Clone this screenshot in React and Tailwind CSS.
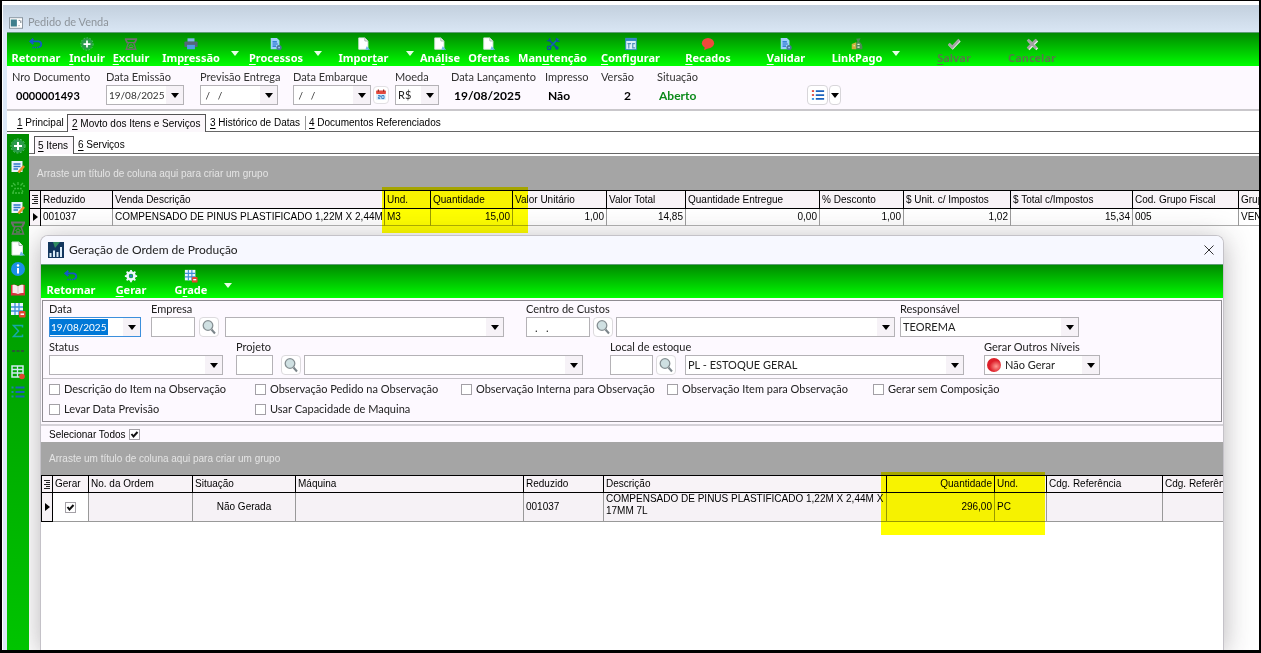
import React from 'react'
import { useState } from 'react'
import clsx from 'clsx'

const Svg = ({ children, className = 'h-4 w-4' }) => (
    <svg viewBox="0 0 16 16" className={clsx('block shrink-0', className)} fill="none" aria-hidden="true">{children}</svg>
)

const icons = {
    undo: (
        <>
            <path d="M5 2 L1.500 5 L5 8 M2 5 H11 Q14 5.500 14 8.500 Q14 11 11 11.500" stroke="#1458c8" strokeWidth="2" />
            <path d="M4 12 H11" stroke="#1458c8" strokeWidth="1.500" strokeDasharray="1.500 1" />
        </>
    ),
    plus: (
        <>
            <circle cx="8" cy="8" r="6.500" fill="#2c9a4c" />
            <circle cx="8" cy="8" r="7" stroke="#5fc47e" strokeDasharray="2 1.500" />
            <path d="M8 4 V12 M4 8 H12" stroke="#fff" strokeWidth="2" />
        </>
    ),
    trash: (
        <>
            <path d="M1 2.500 H15 M2 3 L4 7 M14 3 L12 7" stroke="#6d6f6c" strokeWidth="2" />
            <path d="M5 6.500 H11 L13.500 14 H2.500 Z" stroke="#6d6f6c" strokeWidth="1.500" />
            <path d="M5.500 11 L8 8.500 L10.500 11 M6 12 H10" stroke="#857a80" />
        </>
    ),
    printer: (
        <>
            <rect x="4" y="1.500" width="8" height="4" fill="#7db6ea" />
            <rect x="0.500" y="5" width="15" height="6.500" rx="1" fill="#54657a" />
            <rect x="3.500" y="9" width="9" height="5" fill="#4f9be6" />
        </>
    ),
    process: (
        <>
            <path d="M2 1 H9 L12 4 V14 H2 Z" fill="#9fd0fa" />
            <path d="M4 5.500 H9 M4 8 H10 M4 10.500 H8" stroke="#1869c9" strokeWidth="1.300" />
            <circle cx="11.500" cy="12" r="3" fill="#4a7599" />
            <circle cx="11.500" cy="12" r="1" fill="#9fd0fa" />
        </>
    ),
    page: (
        <>
            <path d="M2 1 H9 L12.500 4.500 V14 H2 Z" fill="#fff" stroke="#d8e6dc" />
            <path d="M9 1 V4.500 H12.500" stroke="#9ab0a4" />
            <path d="M11 10.500 L15 14.500 H9.500 Z" fill="#6fb7ee" />
        </>
    ),
    tools: (
        <>
            <path d="M3 3 L12 12" stroke="#0f4f9d" strokeWidth="2" />
            <path d="M14 2 L4 12" stroke="#1263b4" strokeWidth="2" />
            <path d="M1 4 Q4.500 5.500 4.500 1 M15.500 5 Q11 5.500 12 1" stroke="#0f4f9d" strokeWidth="1.500" />
            <circle cx="3.500" cy="12.500" r="2" stroke="#0f4f9d" strokeWidth="1.500" />
            <circle cx="12.500" cy="12.500" r="2" fill="#0f4f9d" />
        </>
    ),
    config: (
        <>
            <rect x="2" y="1.500" width="12" height="13" fill="#dbeefa" stroke="#2f86c4" />
            <rect x="2" y="1.500" width="12" height="3" fill="#2f86c4" />
            <path d="M4 7.500 H8 M5.500 7.500 V13 M12.500 7.500 H10 V12.500 H12.500" stroke="#4f93bd" strokeWidth="1.300" />
        </>
    ),
    balloon: (
        <>
            <ellipse cx="8" cy="7" rx="7" ry="6" fill="#ef4a3c" />
            <path d="M4.500 11 L3.500 15 L8.500 12.500 Z" fill="#ef4a3c" />
        </>
    ),
    money: (
        <>
            <path d="M7 2 L12 1.500 L10.500 5 Q15 8 14 14 H5 Q5 8 8.500 5 Z" fill="#4c8a55" />
            <path d="M2 8 L7 6 V14 H2 Z" fill="#c9b23c" />
            <path d="M4 10 H5.500 M8.500 8.500 H11 M8.500 11.500 H11" stroke="#e8f4dc" strokeWidth="1.300" />
        </>
    ),
    check: (
        <>
            <path d="M2.500 8.500 L6.500 12.500 L14.500 4" stroke="#e8f0e8" strokeWidth="3" />
            <path d="M2 7.500 L6 11.500 L14 3" stroke="#a3a3a3" strokeWidth="3" />
        </>
    ),
    cross: (
        <>
            <path d="M4 4 L14 14 M14 4 L4 14" stroke="#e8f0e8" strokeWidth="3" />
            <path d="M3 3 L13 13 M13 3 L3 13" stroke="#a3a3a3" strokeWidth="3" />
        </>
    ),
    edit: (
        <>
            <rect x="1.500" y="2" width="11" height="11" fill="#eaf4fd" />
            <path d="M3.500 5 H10.500 M3.500 7.500 H10.500 M3.500 10 H8" stroke="#2f78c8" strokeWidth="1.500" />
            <path d="M8.500 13.500 L14 7" stroke="#f0922e" strokeWidth="2.500" />
        </>
    ),
    inbox: (
        <>
            <path d="M2 14 H14 M3 13 L5 9.500 H11 L13 13" stroke="#3fbd3f" strokeWidth="1.300" strokeDasharray="2 1" />
            <path d="M3 4 L5.500 6.500 M8 3 V6 M13 4 L10.500 6.500 M1 7 H3 M13 7 H15" stroke="#3fbd3f" strokeWidth="1.300" />
        </>
    ),
    info: (
        <>
            <circle cx="8" cy="8" r="7" fill="#1c8fe6" />
            <circle cx="8" cy="4.500" r="1.200" fill="#fff" />
            <path d="M8 7 V12.500" stroke="#fff" strokeWidth="2" />
        </>
    ),
    book: (
        <>
            <path d="M1 3 Q5 1.500 8 4 Q11 1.500 15 3 V13.500 H1 Z" fill="#d8343c" />
            <path d="M2.500 3 Q5.500 2 8 4.500 Q10.500 2 13.500 3 V11 Q10.500 10.500 8 12 Q5.500 10.500 2.500 11 Z" fill="#f6eeee" />
            <path d="M8 4.500 V12" stroke="#d9c6c6" />
        </>
    ),
    grid: (
        <>
            <rect x="1" y="1" width="12" height="12" fill="#e9f5ff" />
            <path d="M1 5 H13 M1 9 H13 M5 1 V13 M9 1 V13" stroke="#3d8fd6" strokeWidth="1.300" />
            <rect x="9" y="9" width="6.500" height="6.500" rx="1" fill="#e2462f" />
            <path d="M10.500 12.200 H14" stroke="#fff" strokeWidth="1.500" />
        </>
    ),
    sigma: <path d="M12.500 4.500 V2.500 H3.500 L8.500 8 L3.500 13.500 H12.500 V11.500" stroke="#17a8a8" strokeWidth="1.500" />,
    dots: <path d="M2 8 H5 M6.500 8 H9.500 M11 8 H14" stroke="#275c33" strokeWidth="2" />,
    table: (
        <>
            <rect x="2" y="2" width="11" height="11" stroke="#cfe9ef" strokeWidth="1.500" />
            <path d="M2 5.500 H13 M2 9 H13 M7.500 2 V13" stroke="#cfe9ef" strokeWidth="1.300" />
            <circle cx="12" cy="12.500" r="2.800" fill="#e2462f" />
        </>
    ),
    list: (
        <>
            <path d="M1.500 3.500 H3.500 M1.500 8 H3.500 M1.500 12.500 H3.500" stroke="#1e88a8" strokeWidth="2" />
            <path d="M5.500 3.500 H14.500 M5.500 8 H14.500 M5.500 12.500 H14.500" stroke="#1a62b8" strokeWidth="2" />
        </>
    ),
    gear: (
        <>
            <circle cx="8" cy="8" r="4" stroke="#eef7ff" strokeWidth="3" />
            <path d="M8 1 V4 M8 12 V15 M1 8 H4 M12 8 H15 M3 3 L5 5 M11 11 L13 13 M13 3 L11 5 M5 11 L3 13" stroke="#eef7ff" strokeWidth="2" />
            <circle cx="8" cy="8" r="2" fill="#2f7fbf" />
        </>
    ),
    calendar: (
        <>
            <rect x="1.500" y="2" width="13" height="12.500" rx="1" fill="#dff0fb" />
            <rect x="1.500" y="2" width="13" height="4.500" rx="1" fill="#e5493d" />
            <path d="M4.500 0.500 V3.500 M11.500 0.500 V3.500" stroke="#8c2b22" strokeWidth="1.500" />
            <path d="M4 8.800 H7 V10.800 H4.500 V12.800 H7 M9 8.800 H12 V12.800 H9 Z" stroke="#2474bd" strokeWidth="1.200" />
        </>
    ),
    bullets: (
        <>
            <path d="M1 3.500 H3.500" stroke="#e0443a" strokeWidth="2" />
            <path d="M1 8 H3.500" stroke="#e0443a" strokeWidth="2" />
            <path d="M1 12.500 H3.500" stroke="#2f8fe0" strokeWidth="2" />
            <path d="M5.500 3.500 H15 M5.500 8 H15 M5.500 12.500 H15" stroke="#1d63bd" strokeWidth="2" />
        </>
    ),
    search: (
        <>
            <path d="M10.500 10.500 L14 14.500" stroke="#7b858a" strokeWidth="2" />
            <circle cx="7" cy="6.500" r="4.800" fill="#cfe0e2" stroke="#868f93" strokeWidth="1.300" />
        </>
    ),
    chart: (
        <>
            <rect width="16" height="16" fill="#12365e" />
            <path d="M5 0 H12 L7 6 Z" fill="#2f8a5f" />
            <path d="M2.500 15 V11 M6 15 V8.500 M9.500 15 V10 M13 15 V5" stroke="#dcecf8" strokeWidth="2" />
        </>
    ),
    app: (
        <>
            <rect x="0.500" y="2" width="15" height="12" fill="#fff" stroke="#7f8b95" />
            <rect x="2" y="4" width="7" height="8" fill="#3f7f8c" />
            <path d="M11 5 H12.500 M13.500 5 V8 M11 11 H12" stroke="#5c6a74" />
        </>
    ),
}

const Icon = ({ name, className }) => <Svg className={className}>{icons[name]}</Svg>

// "&" marks the shortcut letter, as in a classic menu caption
const Caption = ({ text }) => {
    const [before, after] = text.split('&')
    if (after === undefined) return before
    return <>{before}<u className="underline-offset-2">{after[0]}</u>{after.slice(1)}</>
}

const Arrow = ({ className = 'text-black' }) => (
    <svg viewBox="0 0 8 5" className={clsx('block h-[5px] w-2 shrink-0', className)} aria-hidden="true">
        <path d="M0 0 H8 L4 5 Z" fill="currentColor" />
    </svg>
)

const mainTools = [
    { icon: 'undo', text: 'Retornar', width: 'w-[58px]' },
    { icon: 'plus', text: '&Incluir', width: 'w-11' },
    { icon: 'trash', text: '&Excluir', width: 'w-11' },
    { icon: 'printer', text: 'Imp&ressão', width: 'w-[76px]', menu: 'w-3' },
    { icon: 'process', text: '&Processos', width: 'w-[70px]', menu: 'w-3.5' },
    { icon: 'page', text: 'Impor&tar', width: 'w-[77px]', menu: 'w-4' },
    { icon: 'page', text: 'Aná&lise', width: 'w-11' },
    { icon: 'page', text: 'Ofertas', width: 'w-[54px]' },
    { icon: 'tools', text: 'Man&utenção', width: 'w-[73px]' },
    { icon: 'config', text: '&Configurar', width: 'w-[83px]' },
    { icon: 'balloon', text: '&Recados', width: 'w-[72px]' },
    { icon: 'process', text: '&Validar', width: 'w-[84px]' },
    { icon: 'money', text: 'LinkPago', width: 'w-[58px]', menu: 'w-5' },
    { icon: 'check', text: '&Salvar', width: 'w-24', disabled: true },
    { icon: 'cross', text: 'Cancelar', width: 'w-[60px]', disabled: true },
]

const dialogTools = [
    { icon: 'undo', text: 'Retornar', width: 'w-[60px]' },
    { icon: 'gear', text: '&Gerar', width: 'w-[60px]' },
    { icon: 'grid', text: 'G&rade', width: 'w-[60px]', menu: 'w-3.5' },
]

const Toolbar = ({ tools }) => (
    <div className="flex h-[34px] shrink-0 overflow-hidden border-t border-[#5f9d76] bg-linear-to-b from-[#008a00] to-[#00ff00] font-['Noto_Sans',sans-serif] text-[11px] leading-[14px] font-bold">
        {tools.map((tool) => (
            <React.Fragment key={tool.text}>
                <button
                    type="button"
                    disabled={tool.disabled}
                    className={clsx('flex shrink-0 flex-col items-center pt-1 whitespace-nowrap', tool.width, tool.disabled ? 'text-[#557a48]' : 'text-white')}
                >
                    <Icon name={tool.icon} className="h-3.5 w-3.5" />
                    <span><Caption text={tool.text} /></span>
                </button>
                {tool.menu && (
                    <button type="button" aria-label="Opções" className={clsx('flex shrink-0 items-center justify-center pt-2', tool.menu)}>
                        <Arrow className="text-[#e6ffe6]" />
                    </button>
                )}
            </React.Fragment>
        ))}
    </div>
)

const DateBox = ({ id, value, focused }) => (
    <div className={clsx('flex h-5 items-stretch border bg-white text-[10px]', focused ? 'w-[92px] border-[#3c8fdc]' : 'w-[78px] border-[#b4b2b6]')}>
        <div className="flex min-w-0 flex-1 items-center">
            <input
                id={id}
                defaultValue={value}
                className={clsx('h-4 outline-none', focused ? 'w-[58px] bg-[#0078d7] pl-px text-white' : 'w-full pl-0.5 text-[#333] whitespace-pre')}
            />
        </div>
        <button type="button" aria-label="Abrir calendário" className="flex w-[17px] items-center justify-center bg-[#f6f2f7]"><Arrow /></button>
    </div>
)

const Combo = ({ id, label, width, options = [''], children }) => (
    <div className={clsx('flex h-5 shrink-0 items-stretch border border-[#b4b2b6] bg-white', width)}>
        {children}
        <div className="relative flex min-w-0 flex-1">
            <select id={id} aria-label={label} className="w-full appearance-none bg-transparent pr-[17px] pl-0.5 leading-4 text-[#222] outline-none">
                {options.map((option) => <option key={option}>{option}</option>)}
            </select>
            <span className="pointer-events-none absolute inset-y-0 right-0 flex w-[17px] items-center justify-center bg-[#f6f2f7]"><Arrow /></span>
        </div>
    </div>
)

const TextBox = ({ id, width, value }) => (
    <input id={id} defaultValue={value} className={clsx('h-5 shrink-0 border border-[#b4b2b6] bg-white px-2 outline-none', width)} />
)

const SearchButton = () => (
    <button type="button" aria-label="Pesquisar" className="flex h-5 w-5 shrink-0 items-center justify-center rounded border border-[#dcdadd] bg-white">
        <Icon name="search" />
    </button>
)

const Field = ({ label, htmlFor, width, children }) => (
    <div className={clsx('flex shrink-0 flex-col', width)}>
        <label htmlFor={htmlFor} className="h-4 leading-4 whitespace-nowrap">{label}</label>
        <div className="flex items-center">{children}</div>
    </div>
)

const Tab = ({ text, active, divided, className, onClick }) => (
    <button
        type="button"
        role="tab"
        aria-selected={active}
        onClick={onClick}
        className={clsx(
            'h-[18px] shrink-0 text-left whitespace-nowrap',
            active ? 'border border-b-0 border-[#555] bg-[#fbf7fb]' : 'border-b border-[#666]',
            className
        )}
    >
        <span className={clsx('block leading-[14px]', divided && 'border-l border-[#999] pl-[3px]')}><Caption text={text} /></span>
    </button>
)

const GroupBand = ({ className }) => (
    <div className={clsx('flex shrink-0 items-center bg-[#a5a5a5] text-[#e4e4e4]', className)}>
        Arraste um título de coluna aqui para criar um grupo
    </div>
)

const RowMenuIcon = () => (
    <svg viewBox="0 0 6 9" className="mx-auto block h-[9px] w-1.5" aria-hidden="true">
        <path d="M0 0.500 H6 M2 2.500 H6 M0 4.500 H6 M2 6.500 H6 M0 8.500 H6" stroke="#222" />
    </svg>
)

const RowPointer = () => (
    <svg viewBox="0 0 5 8" className="mx-auto block h-2 w-[5px]" aria-hidden="true">
        <path d="M0 0 L5 4 L0 8 Z" fill="#000" />
    </svg>
)

const itemColumns = [
    { title: 'Reduzido', value: '001037', width: 'w-[72px]' },
    { title: 'Venda Descrição', value: 'COMPENSADO DE PINUS PLASTIFICADO 1,22M X 2,44M', width: 'w-[272px]' },
    { title: 'Und.', value: 'M3', width: 'w-[46px]' },
    { title: 'Quantidade', value: '15,00', width: 'w-[82px]', right: true },
    { title: 'Valor Unitário', value: '1,00', width: 'w-[94px]', right: true },
    { title: 'Valor Total', value: '14,85', width: 'w-[79px]', right: true },
    { title: 'Quantidade Entregue', value: '0,00', width: 'w-[134px]', right: true },
    { title: '% Desconto', value: '1,00', width: 'w-[84px]', right: true },
    { title: '$ Unit. c/ Impostos', value: '1,02', width: 'w-[107px]', right: true },
    { title: '$ Total c/Impostos', value: '15,34', width: 'w-[122px]', right: true },
    { title: 'Cod. Grupo Fiscal', value: '005', width: 'w-[106px]' },
    { title: 'Grup', value: 'VEN', width: '' },
]

const ItemsTable = () => (
    <div className="relative">
        <table className="w-full table-fixed border-collapse leading-[14px] whitespace-nowrap">
            <thead>
                <tr className="h-[18px] border-y border-black bg-[#f8f3f7]">
                    <th className="w-[11px] border-x border-black p-0"><RowMenuIcon /></th>
                    {itemColumns.map((col) => (
                        <th key={col.title} className={clsx('overflow-hidden border-l border-black p-0 pl-0.5 text-left font-normal', col.width)}>{col.title}</th>
                    ))}
                </tr>
            </thead>
            <tbody>
                <tr className="h-[17px] border-b border-[#aaa]">
                    <td className="border-x border-black bg-[#f8f3f7] p-0"><RowPointer /></td>
                    {itemColumns.map((col) => (
                        <td key={col.title} className={clsx('overflow-hidden border-l border-[#999] p-0 pl-0.5', col.right && 'pr-0.5 text-right')}>{col.value}</td>
                    ))}
                </tr>
            </tbody>
        </table>
        <div className="pointer-events-none absolute -top-[3px] left-[353px] z-10 h-[46px] w-[146px] bg-[#ffff00] mix-blend-multiply"></div>
    </div>
)

const orderColumns = [
    { title: 'No. da Ordem', value: '', width: 'w-[104px]' },
    { title: 'Situação', value: 'Não Gerada', width: 'w-[103px]', align: 'text-center' },
    { title: 'Máquina', value: '', width: 'w-[228px]' },
    { title: 'Reduzido', value: '001037', width: 'w-20' },
    { title: 'Descrição', value: 'COMPENSADO DE PINUS PLASTIFICADO 1,22M X 2,44M X 17MM 7L', width: 'w-[283px]', align: 'leading-3 whitespace-normal align-top' },
    { title: 'Quantidade', value: '296,00', width: 'w-[108px]', align: 'text-right', head: 'text-right' },
    { title: 'Und.', value: 'PC', width: 'w-[52px]' },
    { title: 'Cdg. Referência', value: '', width: 'w-[116px]' },
    { title: 'Cdg. Referên', value: '', width: '' },
]

const OrdersTable = () => (
    <div className="relative">
        <table className="w-full table-fixed border-collapse leading-[14px] whitespace-nowrap">
            <thead>
                <tr className="h-[17px] border-y border-black bg-[#f8f3f7]">
                    <th className="w-[11px] border-x border-black p-0"><RowMenuIcon /></th>
                    <th className="w-9 border-l border-black p-0 pl-0.5 text-left font-normal">Gerar</th>
                    {orderColumns.map((col) => (
                        <th key={col.title} className={clsx('overflow-hidden border-l border-black p-0 px-0.5 font-normal', col.head || 'text-left', col.width)}>{col.title}</th>
                    ))}
                </tr>
            </thead>
            <tbody>
                <tr className="h-[29px] border-b border-[#999] bg-[#f6f2f6]">
                    <td className="border border-black p-0"><RowPointer /></td>
                    <td className="border-l border-[#999] bg-white p-0"><CheckBox label="Gerar ordem" className="mx-auto" defaultChecked /></td>
                    {orderColumns.map((col) => (
                        <td key={col.title} className={clsx('overflow-hidden border-l border-[#999] p-0 px-0.5', col.align)}>{col.value}</td>
                    ))}
                </tr>
            </tbody>
        </table>
        <div className="pointer-events-none absolute -top-[3px] left-[840px] z-10 h-[63px] w-[164px] bg-[#ffff00] mix-blend-multiply"></div>
    </div>
)

const CheckBox = ({ id, label, className, defaultChecked }) => {
    const [checked, setChecked] = useState(!!defaultChecked)

    return (
        <span className={clsx('relative block h-[11px] w-[11px] shrink-0', className)}>
            <input
                id={id}
                type="checkbox"
                aria-label={label}
                checked={checked}
                onChange={(e) => setChecked(e.target.checked)}
                className="block h-[11px] w-[11px] appearance-none border border-[#a3a0a6] bg-white"
            />
            {checked && (
                <svg viewBox="0 0 11 11" className="pointer-events-none absolute inset-0" aria-hidden="true">
                    <path d="M2.500 5 L4.500 7.500 L8.500 3" stroke="#111" strokeWidth="2" fill="none" />
                </svg>
            )}
        </span>
    )
}

const options = [
    'Descrição do Item na Observação',
    'Observação Pedido na Observação',
    'Observação Interna para Observação',
    'Observação Item para Observação',
    'Gerar sem Composição',
    'Levar Data Previsão',
    'Usar Capacidade de Maquina',
]

const ProductionDialog = () => (
    <section role="dialog" aria-label="Geração de Ordem de Produção" className="mt-[9px] mr-[35px] ml-[11px] flex flex-1 flex-col overflow-hidden rounded-t-lg border border-b-0 border-[#c4c2c8] bg-white shadow-[0_4px_28px_rgba(50,40,50,0.35)]">
        <div className="flex h-7 shrink-0 items-center bg-[#f7f8ff] pr-2 pl-[7px] font-['Lato',sans-serif] text-xs text-[#222]">
            <Icon name="chart" />
            <h2 className="ml-[5px] flex-1">Geração de Ordem de Produção</h2>
            <button type="button" aria-label="Fechar" className="p-px">
                <svg viewBox="0 0 10 10" className="h-2.5 w-2.5" aria-hidden="true"><path d="M0.500 0.500 L9.500 9.500 M9.500 0.500 L0.500 9.500" stroke="#333" /></svg>
            </button>
        </div>
        <Toolbar tools={dialogTools} />

        <div className="shrink-0 border-b-2 border-[#d5d2d8] bg-[#fdf9ff] px-px py-0.5 font-['Lato',sans-serif] text-[11px] text-[#222]">
            <form className="border border-[#8f8c92]">
                <div className="flex px-1.5">
                    <Field label="Data" htmlFor="data" width="w-[102px]"><DateBox id="data" value="19/08/2025" focused /></Field>
                    <Field label="Empresa" htmlFor="empresa" width="w-[375px]">
                        <TextBox id="empresa" width="w-11" />
                        <span className="w-1" />
                        <SearchButton />
                        <span className="w-1.5" />
                        <Combo label="Nome da empresa" width="w-[279px]" />
                    </Field>
                    <Field label="Centro de Custos" htmlFor="centro" width="w-[374px]">
                        <TextBox id="centro" width="w-16" value=".   ." />
                        <span className="w-[3px]" />
                        <SearchButton />
                        <span className="w-[3px]" />
                        <Combo label="Nome do centro de custos" width="w-[279px]" />
                    </Field>
                    <Field label="Responsável" htmlFor="responsavel"><Combo id="responsavel" width="w-[179px]" options={['TEOREMA']} /></Field>
                </div>
                <div className="flex border-b border-[#c4c1c7] px-1.5 pt-0.5 pb-[3px]">
                    <Field label="Status" htmlFor="status" width="w-[187px]"><Combo id="status" width="w-[174px]" /></Field>
                    <Field label="Projeto" htmlFor="projeto" width="w-[374px]">
                        <TextBox id="projeto" width="w-[37px]" />
                        <span className="w-2" />
                        <SearchButton />
                        <span className="w-[3px]" />
                        <Combo label="Nome do projeto" width="w-[279px]" />
                    </Field>
                    <Field label="Local de estoque" htmlFor="local" width="w-[374px]">
                        <TextBox id="local" width="w-[43px]" />
                        <span className="w-[3px]" />
                        <SearchButton />
                        <span className="w-[9px]" />
                        <Combo label="Nome do local" width="w-[279px]" options={['PL - ESTOQUE GERAL']} />
                    </Field>
                    <Field label="Gerar Outros Níveis" htmlFor="niveis">
                        <Combo id="niveis" width="w-[116px]" options={['Não Gerar', 'Gerar']}>
                            <span className="mx-0.5 h-3.5 w-3.5 self-center rounded-full bg-radial-[at_65%_60%] from-[#ff9a92] to-[#dd1f2a] to-50%" />
                        </Combo>
                    </Field>
                </div>
                <div className="grid grid-cols-[repeat(5,206px)] px-1.5 pb-0.5">
                    {options.map((option, i) => (
                        <div key={option} className="flex h-5 items-center gap-1">
                            <CheckBox id={`opcao-${i}`} />
                            <label htmlFor={`opcao-${i}`} className="whitespace-nowrap">{option}</label>
                        </div>
                    ))}
                </div>
            </form>
        </div>

        <div className="flex h-4 shrink-0 items-center gap-[3px] bg-[#fdf9ff] pl-2">
            <label htmlFor="todos">Selecionar Todos</label>
            <CheckBox id="todos" defaultChecked />
        </div>
        <GroupBand className="h-[33px] pl-2" />
        <OrdersTable />
    </section>
)

const sideTools = ['plus', 'edit', 'inbox', 'edit', 'trash', 'page', 'info', 'book', 'grid', 'sigma', 'dots', 'table', 'list']

const mainTabs = [
    { text: '&1 Principal', width: 'w-[60px] pl-2.5' },
    { text: '&2 Movto dos Itens e Serviços', width: 'w-[139px] pl-1' },
    { text: '&3 Histórico de Datas', width: 'w-[99px] pl-1' },
    { text: '&4 Documentos Referenciados', width: 'w-[142px]', divided: true },
]

const OrderHeader = () => (
    <div className="flex h-[45px] shrink-0 overflow-hidden border-b-2 border-[#c9c7cb] bg-[#fdf9ff] pt-[3px] pl-[5px] font-['Lato',sans-serif] text-[11px] text-[#333]">
        <Field label="Nro Documento" width="w-[94px]"><b className="pl-1 text-[11px] leading-[22px] text-black">0000001493</b></Field>
        <Field label="Data Emissão" htmlFor="emissao" width="w-[94px]"><DateBox id="emissao" value="19/08/2025" /></Field>
        <Field label="Previsão Entrega" htmlFor="previsao" width="w-[93px]"><DateBox id="previsao" value=" /   /" /></Field>
        <Field label="Data Embarque" htmlFor="embarque" width="w-[102px]">
            <DateBox id="embarque" value=" /   /" />
            <button type="button" aria-label="Calendário" className="ml-0.5 flex h-[18px] w-4 items-center justify-center rounded border border-[#e2e0e4] bg-white">
                <Icon name="calendar" className="h-3 w-3" />
            </button>
        </Field>
        <Field label="Moeda" htmlFor="moeda" width="w-14"><Combo id="moeda" width="w-11" options={['R$']} /></Field>
        <Field label="Data Lançamento" width="w-[94px]"><b className="pl-[3px] text-xs leading-[22px] text-black">19/08/2025</b></Field>
        <Field label="Impresso" width="w-14"><b className="pl-[3px] text-xs leading-[22px] text-black">Não</b></Field>
        <Field label="Versão" width="w-14"><b className="w-[30px] text-right text-xs leading-[22px] text-black">2</b></Field>
        <Field label="Situação" width="w-[150px]"><b className="pl-0.5 text-xs leading-[22px] text-[#0b8a1a]">Aberto</b></Field>
        <div className="flex items-end gap-px pb-1">
            <button type="button" aria-label="Lista" className="flex h-5 w-[21px] items-center justify-center rounded border border-[#d8d6da] bg-white">
                <Icon name="bullets" className="h-3.5 w-3.5" />
            </button>
            <button type="button" aria-label="Mais opções" className="flex h-5 w-3 items-center justify-center rounded border border-[#d8d6da] bg-white"><Arrow /></button>
        </div>
    </div>
)

const App = () => {
    const [tab, setTab] = useState(1)
    const [subTab, setSubTab] = useState(0)

    return (
        <div className="flex min-h-screen flex-col overflow-hidden border-x-2 border-t border-b-[3px] border-black bg-white pt-1 pl-px font-['Liberation_Sans',sans-serif] text-[10px] text-black">
            <header className="flex h-[27px] shrink-0 items-center gap-[5px] bg-linear-to-b from-[#c3d0de] to-[#d9e6f4] pt-2 pl-1.5 font-['Lato',sans-serif] text-[11px] text-[#8d949b]">
                <Icon name="app" className="h-3.5 w-3.5" />
                <h1>Pedido de Venda</h1>
            </header>

            <div className="flex flex-1 flex-col border-l-4 border-[#dbe8f7]">
                <Toolbar tools={mainTools} />
                <OrderHeader />

                <div role="tablist" className="flex h-[21px] shrink-0 items-end">
                    {mainTabs.map((item, i) => (
                        <Tab key={item.text} text={item.text} className={item.width} divided={item.divided} active={tab === i} onClick={() => setTab(i)} />
                    ))}
                    <span className="h-full flex-1 border-b border-[#666]" />
                </div>

                <div className="mt-0.5 flex flex-1">
                    <nav className="w-[22px] shrink-0 bg-linear-to-b from-[#008c00] to-[#00c400] pt-1">
                        <div className="flex h-[262px] flex-col items-center justify-between">
                            {sideTools.map((name, i) => (
                                <button key={i} type="button" aria-label={name}><Icon name={name} className="h-4 w-4" /></button>
                            ))}
                        </div>
                    </nav>

                    <main className="flex min-w-0 flex-1 flex-col overflow-hidden">
                        <div role="tablist" className="flex h-5 shrink-0 items-end">
                            <span className="w-[5px] border-b border-[#666]" />
                            <Tab text="&5 Itens" className="w-10 pl-[3px]" active={subTab === 0} onClick={() => setSubTab(0)} />
                            <Tab text="&6 Serviços" className="w-[54px] pl-1" active={subTab === 1} onClick={() => setSubTab(1)} />
                            <span className="h-full flex-1 border-b border-[#666]" />
                        </div>
                        <GroupBand className="mt-0.5 h-[34px] pl-2" />
                        <ItemsTable />
                        <ProductionDialog />
                    </main>
                </div>
            </div>
        </div>
    )
}

export default App
